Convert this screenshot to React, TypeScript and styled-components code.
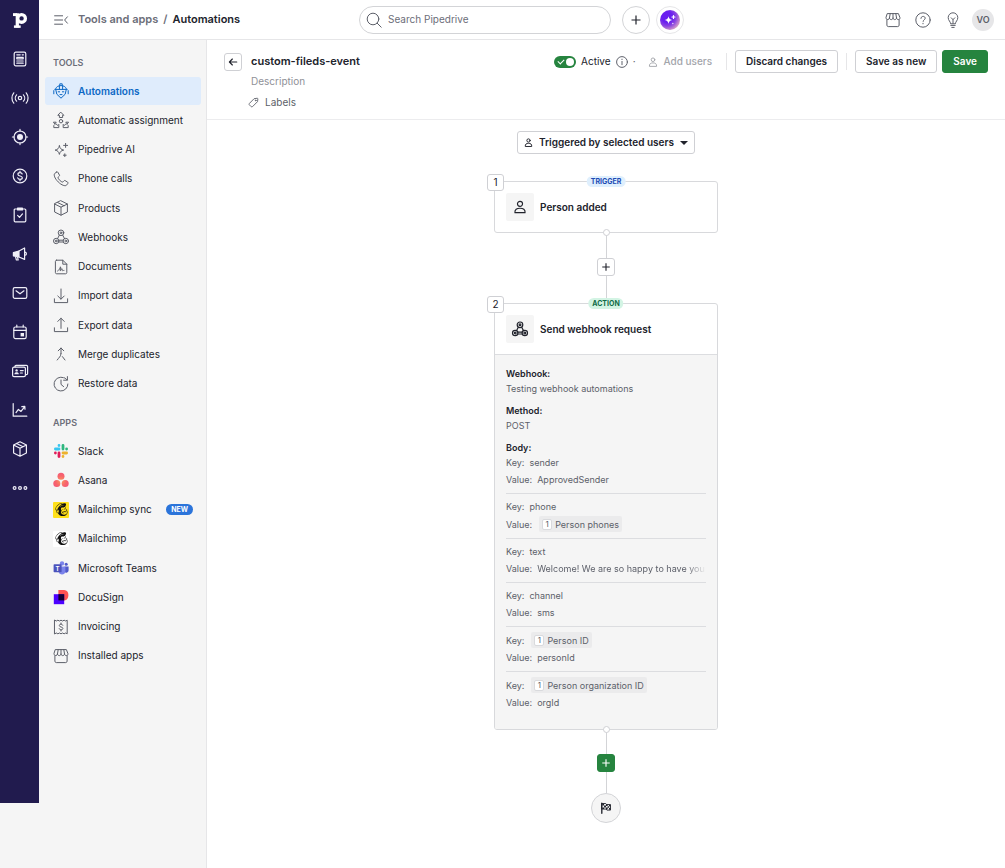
import React from 'react';
import styled, { createGlobalStyle, css } from 'styled-components';
import { FaMailchimp } from 'react-icons/fa';

const GlobalStyle = createGlobalStyle`
  *, *::before, *::after { box-sizing: border-box; }
  body {
    margin: 0;
    background: #fff;
    color: #21232c;
    font-family: Inter, "Liberation Sans", sans-serif;
    font-size: 10px;
    line-height: 15px;
  }
  button, input, select { font: inherit; color: inherit; margin: 0; }
  button { cursor: pointer; }
  a { color: inherit; text-decoration: none; }
  ul, h1, h2, h3, p, dl, dd { margin: 0; padding: 0; list-style: none; font: inherit; }
  svg { display: block; flex: none; }
`;

/* ---------- icons ---------- */

const Line = styled.svg.attrs<{ $size?: number; $stroke?: number }>({
  viewBox: '0 0 16 16',
  'aria-hidden': true,
})<{ $size?: number; $stroke?: number }>`
  width: ${p => p.$size ?? 16}px;
  height: ${p => p.$size ?? 16}px;
  fill: none;
  stroke: currentColor;
  stroke-width: ${p => p.$stroke ?? 1};
  stroke-linecap: round;
  stroke-linejoin: round;
  overflow: visible;
`;

const solid = { fill: 'currentColor', stroke: 'none' };

const PipedriveLogo = () => (
  <Line $size={18} $stroke={2.9}>
    <path d="M5.600 2v12.600" strokeLinecap="butt" />
    <path d="M1.800 3.200h3.400" strokeLinecap="butt" strokeWidth="2.600" />
    <circle cx="9.400" cy="6.600" r="3.400" />
    <path d="M2.600 13.900h6" strokeLinecap="butt" strokeWidth="2.200" />
  </Line>
);

const shapes = {
  news: (
    <>
      <rect x="2.200" y="1.200" width="11.600" height="13.600" rx="1.600" />
      <path d="M4.800 3.800h3.400M10.200 3.800h1.200M4.800 6.400h6.400v1.400H4.800zM4.800 10h6.400M4.800 12.200h6.400" />
    </>
  ),
  radio: (
    <>
      <circle cx="8" cy="8" r="1.700" />
      <path d="M4.600 4.800a4.600 4.600 0 0 0 0 6.400M11.400 4.800a4.600 4.600 0 0 1 0 6.400M1.800 2.800a8.200 8.200 0 0 0 0 10.400M14.200 2.800a8.200 8.200 0 0 1 0 10.400" />
    </>
  ),
  target: (
    <>
      <circle cx="8" cy="8" r="6" />
      <circle cx="8" cy="8" r="3" {...solid} />
      <path d="M8 .4v1.800M8 13.800v1.800M.4 8h1.800M13.800 8h1.800" />
    </>
  ),
  dollar: (
    <>
      <circle cx="8" cy="8" r="6.800" />
      <path d="M10.200 6c-.3-.9-1.100-1.400-2.200-1.400-1.200 0-2.100.6-2.100 1.600 0 2.400 4.400 1.200 4.400 3.600 0 1-1 1.600-2.200 1.600-1.200 0-2.100-.5-2.400-1.500M8 3.200v1.400M8 11.400v1.400" />
    </>
  ),
  clipboard: (
    <>
      <rect x="2.200" y="2" width="11.600" height="12.800" rx="1" />
      <path d="M5.600 1h4.800v2H5.600z" fill="currentColor" />
      <path d="M5.600 8.400l1.900 1.900 3-3.400" />
    </>
  ),
  megaphone: (
    <>
      <path d="M1.400 6.600L7 5v6l-5.600-1.200z" fill="currentColor" />
      <path d="M7 5l5.600-3v11.400L7 11M13.200 6.200c1.600.2 1.600 2.800 0 3M3.600 11l.8 3h1.800l-.6-2.600" />
    </>
  ),
  mail: (
    <>
      <rect x="1.200" y="2.600" width="13.600" height="10.800" rx="1.600" />
      <path d="M4 5.800l4 3 4-3" />
    </>
  ),
  calendar: (
    <>
      <rect x="1.800" y="3" width="12.400" height="11.600" rx="1.600" />
      <path d="M2 6.400h12M4.800 1.200V3M11.200 1.200V3" />
      <path d="M8.600 9h3.400v3.400H8.600z" {...solid} />
    </>
  ),
  cards: (
    <>
      <rect x=".6" y="4.200" width="12.800" height="9.400" rx="1.400" />
      <path d="M3 4V3.400c0-.6.4-1 1-1h10.400c.7 0 1.200.5 1.200 1.200v6.800c0 .7-.5 1.200-1.200 1.200h-.8" />
      <circle cx="4.600" cy="7.400" r="1.200" {...solid} />
      <path d="M2.400 11.200c0-2.600 4.400-2.600 4.400 0z" {...solid} />
      <path d="M8.400 7.600h2.800M8.400 10h2" />
    </>
  ),
  chart: <path d="M1.200 1.600v12.600h13.600M4 10.600l2.400-3.200 2.600 2 3.600-4.600M9.800 4.600l3-.2.200 2.800" />,
  box: <path d="M8 .8l6.400 3.200v8L8 15.200 1.600 12V4zM1.600 4L8 7.200 14.400 4M8 7.200v8M4.600 2.500L11 5.700" />,
  more: (
    <>
      <circle cx="2.600" cy="8" r="1.400" />
      <circle cx="8" cy="8" r="1.400" />
      <circle cx="13.400" cy="8" r="1.400" />
    </>
  ),
  menu: <path d="M1.600 3.800h8M1.600 8h8M1.600 12.200h8M14.400 4.800L11.600 8l2.800 3.200" />,
  robot: (
    <>
      <path d="M2.800 6.800l1 4.400L8 15.200l4.200-4 1-4.400M1.800 6.400h12.400M2.600 5.800C3.400 3.600 5.600 2.600 8 2.600s4.600 1 5.400 3.200M6.800 2.600V.8h2.400v1.800M.8 7.600v3.200M15.200 7.600v3.200M6.400 3v3.200M9.600 3v3.200" />
      <path d="M5.200 8.800h1.400M9.400 8.800h1.400M7 11.600h2" />
    </>
  ),
  assign: (
    <>
      <circle cx="8" cy="9.200" r="1.700" />
      <path d="M8 .4l2.800 2.900H9.600v2.200H6.400V3.300H5.200zM.8 10.200h2.400l-.8 1.200 2.400 2 1-1v3.200H.8v-2l1-1zM15.200 10.200h-2.400l.8 1.200-2.400 2-1-1v3.200h5v-2l-1-1z" />
    </>
  ),
  sparkles: (
    <>
      <path d="M6.400 3.800c.6 2.700 1.600 3.700 4.300 4.300-2.700.6-3.700 1.600-4.300 4.300-.6-2.700-1.600-3.700-4.300-4.300 2.700-.6 3.700-1.600 4.300-4.300z" />
      <path d="M12.600 1.400v4M10.600 3.400h4M11.800 11.800v2.800M10.400 13.200h2.800" />
    </>
  ),
  phone: (
    <path d="M3.600 1L1.600 2.600C.6 3.800 1.600 7.400 5.200 10.900c3.500 3.500 7 4.400 8.200 3.400l1.500-1.900c.3-.4.2-.9-.2-1.200l-2.600-1.600c-.4-.2-.8-.2-1.100.2l-.9 1c-.4.400-.9.300-1.300.1C7.200 10 6 8.800 5.200 7.300c-.2-.4-.3-.9.1-1.300l.9-.8c.4-.3.5-.8.200-1.200L4.900 1.300C4.600.8 4 .7 3.600 1z" />
  ),
  webhook: (
    <>
      <circle cx="8" cy="3.800" r="2.800" />
      <circle cx="3.200" cy="12" r="2.700" />
      <circle cx="12.800" cy="12" r="2.700" />
      <circle cx="8" cy="3.800" r=".9" />
      <circle cx="3.200" cy="12" r=".9" />
      <circle cx="12.800" cy="12" r=".9" />
      <path d="M6.300 6.200L4.600 9.600M9.700 6.200l1.800 3.400M6 11.200h4M6 13h4" />
    </>
  ),
  document: (
    <>
      <path d="M3.600 1.200h6.200l4 4v8.400c0 .7-.5 1.200-1.200 1.200h-9c-.7 0-1.200-.5-1.200-1.200V2.400c0-.7.5-1.200 1.200-1.200zM9.800 1.200v4h4" />
      <path d="M4.600 12c1.600-1 2.600-2.600 2.800-4.200.8 1-.4 3-.2 4 1-.2 1-2.200 1.800-2.200.6.200-.2 2 .6 2.200.4 0 .6-.4 1.400-.4" />
    </>
  ),
  download: <path d="M8 1v10M4.800 8L8 11.200 11.200 8M1.400 10.800v3.800h13.200v-3.800" />,
  upload: <path d="M8 11.400V1.200M4.800 4.400L8 1.200l3.200 3.200M1.400 10.800v3.800h13.200v-3.800" />,
  merge: <path d="M8 7.600V2M5.200 4.800L8 2l2.800 2.800M8 7.600c0 2.800-2.200 4-3.800 6.400M9.400 10.600L12 14" />,
  restore: <path d="M10.400 1.600A6.900 6.900 0 1 0 14.900 8M10.600 4.200h3.800V.6M14.200 4C13.400 3 12.400 2.200 11.400 1.800M8 4v4.400l2.600 2.200" />,
  receipt: (
    <>
      <path d="M1.800 1.200l1.500.8 1.600-.8 1.500.8L8 1.200l1.600.8 1.500-.8 1.600.8 1.500-.8v13.600l-1.500-.8-1.600.8-1.500-.8-1.600.8-1.600-.8-1.500.8-1.600-.8-1.500.8z" />
      <path d="M9.800 6.300C9.600 5.600 8.900 5.200 8 5.200c-1 0-1.700.5-1.700 1.300 0 2 3.600 1 3.600 3 0 .8-.8 1.300-1.800 1.300S6.400 10.400 6.200 9.600M8 4v1.200M8 10.800V12" />
    </>
  ),
  store: (
    <>
      <path d="M2.600 1.600h10.800l1.600 4.200c0 2.400-3.400 2.400-3.500 0 0 2.400-3.500 2.400-3.500 0 0 2.400-3.500 2.400-3.500 0C4.400 8.200 1 8.200 1 5.800zM4.500 5.800l.7-4.200M8 5.800V1.600M11.500 5.800l-.7-4.200" />
      <path d="M1.900 7.600v5.600c0 .8.600 1.400 1.400 1.400h9.400c.8 0 1.400-.6 1.400-1.400V7.600" />
    </>
  ),
  search: (
    <>
      <circle cx="7" cy="7" r="5.800" />
      <path d="M11.200 11.200l4 4" />
    </>
  ),
  plus: <path d="M8 2v12M2 8h12" strokeLinecap="butt" />,
  help: (
    <>
      <circle cx="8" cy="8" r="7.200" />
      <path d="M5.900 6.400c0-2.800 4.300-2.600 4.300-.2 0 1.600-2.100 1.600-2.100 3.200M8 11.300v.5" />
    </>
  ),
  bulb: (
    <>
      <path d="M5.600 11.400c0-1.800-2.400-2.800-2.400-5.800a4.800 4.800 0 0 1 9.600 0c0 3-2.400 4-2.400 5.800zM5.800 13.400h4.400M6.800 15.400h2.400M6.200 5.800L8 7.600l1.800-1.800M8 7.600v3.600" />
    </>
  ),
  back: <path d="M14 8H2.400M7 3.200L2.200 8 7 12.800" />,
  tag: (
    <>
      <path d="M9.400 2.400l4-.6c.6 0 1 .4 1 1l-.6 4-7.200 7.200c-.6.6-1.400.6-2 0l-2.600-2.600c-.6-.6-.6-1.400 0-2z" />
      <circle cx="11.200" cy="5" r=".6" />
    </>
  ),
  person: (
    <>
      <circle cx="8" cy="4.400" r="2.900" />
      <path d="M2.200 14.400c-.4-3.400 2.200-5 5.800-5s6.200 1.600 5.800 5z" />
    </>
  ),
  info: (
    <>
      <circle cx="8" cy="8" r="7.200" />
      <path d="M8 7.200v4.400M8 4.200v.6" />
    </>
  ),
  flag: (
    <>
      <path d="M2.400 15V1.600" strokeWidth="1.800" />
      <path d="M2.600 2h5l1 1.400H14v7.400H9.200l-1-1.400H2.600z" />
      <path d="M3 2.400h2.400v2.400H3zM5.400 4.800h2.600v2.400H5.400zM8 3h2.200v2.400H8zM10.200 5.600h2v2h-2zM8 7.400h2.200v2.200H8zM12 3.600h1.800v2H12zM3 7.200h2.400v2H3zM12 8h1.800v2.400H12z" {...solid} />
    </>
  ),
};

type IconName = keyof typeof shapes;

const Icon = ({ name, size, stroke }: { name: IconName; size?: number; stroke?: number }) => (
  <Line $size={size} $stroke={stroke}>{shapes[name]}</Line>
);

const Logo = styled.svg.attrs({ viewBox: '0 0 16 16', 'aria-hidden': true })`
  width: 16px;
  height: 16px;
`;

const SlackLogo = () => (
  <Logo>
    <g strokeWidth="2.800" strokeLinecap="round">
      <path d="M6 2.400v.1M2.400 6H6" stroke="#36c5f0" />
      <path d="M13.600 6v.1M10 2.400V6" stroke="#2eb67d" />
      <path d="M10 13.600v-.1M10 10h3.600" stroke="#ecb22e" />
      <path d="M2.400 10v-.1M6 10v3.600" stroke="#e01e5a" />
    </g>
  </Logo>
);

const AsanaLogo = () => (
  <Logo>
    <defs>
      <radialGradient id="asana" gradientUnits="userSpaceOnUse" cx="8" cy="9" r="9">
        <stop offset="0" stopColor="#f99a5c" />
        <stop offset=".6" stopColor="#f7646c" />
        <stop offset="1" stopColor="#f4587a" />
      </radialGradient>
    </defs>
    <g fill="url(#asana)">
      <circle cx="8" cy="4.200" r="3.500" />
      <circle cx="3.800" cy="11.600" r="3.500" />
      <circle cx="12.200" cy="11.600" r="3.500" />
    </g>
  </Logo>
);

const TeamsLogo = () => (
  <Logo>
    <circle cx="13.200" cy="4.200" r="1.500" fill="#5059c9" />
    <circle cx="9" cy="3.400" r="2.200" fill="#7b83eb" />
    <path d="M11.600 6.400h4v4a2.400 2.400 0 0 1-4 1.600z" fill="#5059c9" />
    <path d="M5.400 6.400h7v5a3.600 3.600 0 0 1-7 .4z" fill="#7b83eb" />
    <rect x=".6" y="4.200" width="8" height="8" rx=".7" fill="#4b53bc" />
    <text x="4.600" y="10.500" fontSize="6" fontWeight="700" textAnchor="middle" fill="#fff">T</text>
  </Logo>
);

const DocuSignLogo = () => (
  <Logo>
    <path d="M5.400 1h5.800c2.800 0 4.200 2.200 4.200 5s-1.400 5.400-4.200 5.400H5.400z" fill="#ff5252" />
    <path d="M.8 5.200h10.400v10H.8z" fill="#4c00ff" />
    <path d="M5.400 5.200h5.800v6.200H5.400z" fill="#130032" />
  </Logo>
);

const ChimpTile = styled.span<{ $background: string }>`
  display: grid;
  place-items: center;
  width: 16px;
  height: 16px;
  border-radius: 1px;
  background: ${p => p.$background};
`;

/* ---------- page frame ---------- */

const Page = styled.div`
  display: grid;
  grid-template-columns: 39px 168px minmax(0, 1fr);
  grid-template-rows: 40px 1fr;
  min-height: 100vh;
`;

const RailColumn = styled.div`
  grid-row: 1 / 3;
  padding-bottom: 65px;
  background: #f5f5f5;
`;

const Rail = styled.nav`
  display: flex;
  flex-direction: column;
  align-items: center;
  height: 100%;
  background: #211b4e;
  color: #fff;
`;

const RailLogo = styled.a`
  display: grid;
  place-items: center;
  width: 39px;
  height: 39px;
`;

const RailLink = styled.a`
  display: grid;
  place-items: center;
  width: 39px;
  height: 39px;
  color: #f0eff8;
`;

const TopBar = styled.header`
  grid-column: 2 / 4;
  display: grid;
  grid-template-columns: 1fr auto 1fr;
  align-items: center;
  padding: 0 11px 0 10px;
  border-bottom: 1px solid #e6e6e8;
  background: #fff;
`;

const Crumbs = styled.nav`
  display: flex;
  align-items: center;
  gap: 5px;
  font-size: 11px;
  font-weight: 600;
  white-space: nowrap;
  color: #6c6e79;
`;

const PlainButton = styled.button`
  display: grid;
  place-items: center;
  padding: 0;
  border: 0;
  background: none;
  color: #5c5f69;
`;

const MenuButton = styled(PlainButton)`
  margin: 0 4px;
`;

const Current = styled.span`
  color: #21232c;
`;

const SearchGroup = styled.div`
  display: flex;
  align-items: center;
`;

const SearchBox = styled.label`
  display: flex;
  align-items: center;
  gap: 6px;
  width: 252px;
  height: 28px;
  padding: 0 6px;
  border: 1px solid #d3d4d7;
  border-radius: 14px;
  color: #5c5f69;
  input {
    flex: 1;
    min-width: 0;
    padding: 0;
    border: 0;
    outline: 0;
    background: none;
  }
  input::placeholder { color: #6c6e79; opacity: 1; }
`;

const RoundButton = styled.button`
  display: grid;
  place-items: center;
  width: 28px;
  height: 28px;
  margin-left: 11px;
  padding: 0;
  border: 1px solid #d3d4d7;
  border-radius: 50%;
  background: #fff;
  color: #21232c;
`;

const AiButton = styled(RoundButton)`
  margin-left: 6px;
  border-color: #e6e6e8;
`;

const AiOrb = styled.span`
  display: grid;
  place-items: center;
  width: 20px;
  height: 20px;
  border-radius: 50%;
  background: radial-gradient(circle at 35% 35%, #6a1ff0 0 30%, #8b45e0 50%, #d49bc8 75%, #f1d8dc 100%);
  color: #fff;
`;

const TopActions = styled.div`
  display: flex;
  align-items: center;
  justify-content: flex-end;
  gap: 14px;
`;

const Avatar = styled.button`
  width: 22px;
  height: 22px;
  margin-left: -3px;
  padding: 0;
  border: 0;
  border-radius: 50%;
  background: #e6e6e8;
  color: #5c5f69;
  font-size: 9px;
  font-weight: 600;
  line-height: 22px;
`;

/* ---------- sidebar ---------- */

const Sidebar = styled.aside`
  padding: 15px 5px 0 6px;
  border-right: 1px solid #e6e6e8;
  background: #f5f5f5;
`;

const GroupTitle = styled.h2`
  padding-left: 8px;
  font-size: 9px;
  font-weight: 600;
  color: #6c6e79;
`;

const NavList = styled.ul<{ $height: number }>`
  display: grid;
  grid-auto-rows: 1fr;
  height: ${p => p.$height}px;
  margin: 7px 0 16px;
`;

const NavLink = styled.a<{ $active?: boolean }>`
  display: flex;
  align-items: center;
  gap: 9px;
  height: 28px;
  padding: 0 8px;
  border-radius: 3px;
  white-space: nowrap;
  color: #21232c;
  > :first-child { color: #5c5f69; }
  ${p => p.$active && css`
    background: #dfecfc;
    color: #0d68c5;
    font-weight: 600;
    > :first-child { color: #0d68c5; }
  `}
`;

const NewBadge = styled.span`
  margin-left: auto;
  padding: 0 5px;
  border-radius: 6px;
  background: #2b74da;
  color: #fff;
  font-size: 7px;
  font-weight: 700;
  line-height: 11px;
`;

/* ---------- editor ---------- */

const Editor = styled.main`
  display: flex;
  flex-direction: column;
  min-width: 0;
  background: #fff;
`;

const EditorHeader = styled.div`
  display: flex;
  justify-content: space-between;
  align-items: flex-start;
  padding: 10px 17px 9px;
  border-bottom: 1px solid #ececee;
`;

const TitleBlock = styled.div`
  display: grid;
  grid-template-columns: 18px auto;
  column-gap: 9px;
  row-gap: 1px;
  align-items: center;
`;

const SquareButton = styled.button<{ $primary?: boolean }>`
  display: grid;
  place-items: center;
  width: 18px;
  height: 18px;
  padding: 0;
  border: 1px solid ${p => (p.$primary ? '#26843f' : '#cfd0d4')};
  border-radius: 3px;
  background: ${p => (p.$primary ? '#26843f' : '#fff')};
  color: ${p => (p.$primary ? '#fff' : '#21232c')};
`;

const Title = styled.h1`
  font-size: 11px;
  font-weight: 600;
  line-height: 23px;
`;

const Description = styled.p`
  grid-column: 2;
  color: #8f9198;
`;

const LabelsButton = styled.button`
  grid-column: 2;
  justify-self: start;
  display: flex;
  align-items: center;
  gap: 6px;
  margin: 5px 0 0 -3px;
  padding: 0;
  border: 0;
  background: none;
  color: #5c5f69;
`;

const Controls = styled.div`
  display: flex;
  align-items: center;
  height: 23px;
  white-space: nowrap;
`;

const SwitchLabel = styled.label`
  display: flex;
  align-items: center;
  gap: 5px;
  margin-right: 5px;
`;

const Switch = styled.input.attrs({ type: 'checkbox', role: 'switch' })`
  appearance: none;
  position: relative;
  width: 22px;
  height: 12px;
  border-radius: 6px;
  background: #b8bac0;
  &:checked { background: #26843f; }
  &::before {
    content: '';
    position: absolute;
    top: 2px;
    left: 2px;
    width: 8px;
    height: 8px;
    border-radius: 50%;
    background: #fff;
  }
  &:checked::before { left: 12px; }
  &:checked::after {
    content: '';
    position: absolute;
    top: 3px;
    left: 4px;
    width: 6px;
    height: 4px;
    border: solid #fff;
    border-width: 0 0 1px 1px;
    transform: rotate(-45deg);
  }
`;

const Dot = styled.span`
  margin: 0 12px 0 5px;
  color: #5c5f69;
`;

const AddUsers = styled.button`
  display: flex;
  align-items: center;
  gap: 6px;
  padding: 0;
  border: 0;
  background: none;
  color: #a3a5ab;
  font-weight: 500;
`;

const Divider = styled.span<{ $left: number }>`
  width: 1px;
  height: 17px;
  margin: 0 8px 0 ${p => p.$left}px;
  background: #e6e6e8;
`;

const Button = styled.button<{ $primary?: boolean }>`
  height: 23px;
  padding: 0 10px;
  border: 1px solid ${p => (p.$primary ? '#26843f' : '#cfd0d4')};
  border-radius: 3px;
  background: ${p => (p.$primary ? '#26843f' : '#fff')};
  color: ${p => (p.$primary ? '#fff' : '#21232c')};
  font-weight: 600;
  & + & { margin-left: 5px; }
`;

/* ---------- flow ---------- */

const Flow = styled.div`
  display: flex;
  flex-direction: column;
  align-items: center;
  padding: 11px 16px 40px;
`;

const TriggerPicker = styled.label`
  display: flex;
  align-items: center;
  gap: 6px;
  height: 23px;
  margin-bottom: 27px;
  padding: 0 6px;
  border: 1px solid #cfd0d4;
  border-radius: 3px;
  font-weight: 600;
  select {
    appearance: none;
    padding: 0;
    border: 0;
    outline: 0;
    background: none;
  }
`;

const Caret = styled.span`
  border: solid transparent;
  border-width: 4px 4px 0;
  border-top-color: #21232c;
`;

const Card = styled.section`
  position: relative;
  width: 224px;
  border: 1px solid #d8d9dc;
  border-radius: 3px;
  background: #fff;
`;

const StepNumber = styled.span`
  position: absolute;
  top: -8px;
  left: -8px;
  width: 17px;
  height: 17px;
  border: 1px solid #cfd0d4;
  border-radius: 3px;
  background: #fff;
  line-height: 15px;
  text-align: center;
`;

const KindBadge = styled.span<{ $kind: 'trigger' | 'action' }>`
  position: absolute;
  top: -6px;
  left: 50%;
  transform: translateX(-50%);
  padding: 0 4px;
  border-radius: 6px;
  background: ${p => (p.$kind === 'trigger' ? '#dfeffd' : '#d3f4e4')};
  color: ${p => (p.$kind === 'trigger' ? '#1d4bb4' : '#0f6b46')};
  font-size: 7px;
  font-weight: 700;
  line-height: 11px;
`;

const Port = styled.span`
  position: absolute;
  bottom: -4px;
  left: 50%;
  width: 7px;
  height: 7px;
  margin-left: -3px;
  border: 1px solid #cfd0d4;
  border-radius: 50%;
  background: #fff;
`;

const CardHead = styled.div`
  display: flex;
  align-items: center;
  gap: 6px;
  height: 50px;
  padding: 0 11px;
`;

const IconTile = styled.span`
  display: grid;
  place-items: center;
  width: 28px;
  height: 28px;
  border-radius: 2px;
  background: #f5f5f5;
`;

const CardTitle = styled.h3`
  font-weight: 600;
`;

const CardBody = styled.div`
  padding: 11px 11px 19px;
  border-top: 1px solid #dcdde0;
  border-radius: 0 0 2px 2px;
  background: #f5f5f5;
  color: #5c5f69;
  font-size: 9px;
`;

const Fact = styled.dl`
  margin-bottom: 7px;
  dt { font-weight: 600; color: #21232c; }
`;

const BodyTitle = styled.h4`
  margin: 0;
  font-size: 9px;
  font-weight: 600;
  color: #21232c;
`;

const Pair = styled.dl`
  display: grid;
  grid-template-columns: minmax(0, 1fr);
  row-gap: 2px;
  & + & {
    margin-top: 6px;
    padding-top: 5px;
    border-top: 1px solid #dcdde0;
  }
`;

const PairRow = styled.div`
  display: flex;
  align-items: center;
  gap: 5px;
`;

const PairValue = styled.dd<{ $fade?: boolean }>`
  flex: 1;
  min-width: 0;
  overflow: hidden;
  white-space: nowrap;
  ${p => p.$fade && css`
    mask-image: linear-gradient(to right, #000 88%, transparent);
  `}
`;

const Chip = styled.span`
  display: inline-flex;
  align-items: center;
  gap: 3px;
  height: 16px;
  margin-left: 2px;
  padding: 0 3px;
  border-radius: 2px;
  background: #ebebec;
  vertical-align: top;
`;

const ChipNumber = styled.span`
  width: 10px;
  height: 11px;
  border: 1px solid #d9dadd;
  border-radius: 2px;
  background: #fff;
  font-size: 8px;
  line-height: 9px;
  text-align: center;
`;

const Connector = styled.span<{ $length: number }>`
  width: 1px;
  height: ${p => p.$length}px;
  background: #d3d4d7;
`;

const EndNode = styled.span`
  display: grid;
  place-items: center;
  width: 30px;
  height: 30px;
  border: 1px solid #d3d4d7;
  border-radius: 50%;
  background: #f5f5f5;
`;

/* ---------- data ---------- */

const railLinks: { icon: IconName; label: string }[] = [
  { icon: 'news', label: 'Feed' },
  { icon: 'radio', label: 'Pulse' },
  { icon: 'target', label: 'Leads' },
  { icon: 'dollar', label: 'Deals' },
  { icon: 'clipboard', label: 'Projects' },
  { icon: 'megaphone', label: 'Campaigns' },
  { icon: 'mail', label: 'Mail' },
  { icon: 'calendar', label: 'Activities' },
  { icon: 'cards', label: 'Contacts' },
  { icon: 'chart', label: 'Insights' },
  { icon: 'box', label: 'Products' },
  { icon: 'more', label: 'More' },
];

const tools: { icon: IconName; label: string }[] = [
  { icon: 'robot', label: 'Automations' },
  { icon: 'assign', label: 'Automatic assignment' },
  { icon: 'sparkles', label: 'Pipedrive AI' },
  { icon: 'phone', label: 'Phone calls' },
  { icon: 'box', label: 'Products' },
  { icon: 'webhook', label: 'Webhooks' },
  { icon: 'document', label: 'Documents' },
  { icon: 'download', label: 'Import data' },
  { icon: 'upload', label: 'Export data' },
  { icon: 'merge', label: 'Merge duplicates' },
  { icon: 'restore', label: 'Restore data' },
];

const apps: { logo: React.ReactNode; label: string; isNew?: boolean }[] = [
  { logo: <SlackLogo />, label: 'Slack' },
  { logo: <AsanaLogo />, label: 'Asana' },
  { logo: <ChimpTile $background="#ffe01b"><FaMailchimp size={15} color="#111" /></ChimpTile>, label: 'Mailchimp sync', isNew: true },
  { logo: <ChimpTile $background="#fff"><FaMailchimp size={15} color="#111" /></ChimpTile>, label: 'Mailchimp' },
  { logo: <TeamsLogo />, label: 'Microsoft Teams' },
  { logo: <DocuSignLogo />, label: 'DocuSign' },
  { logo: <Icon name="receipt" />, label: 'Invoicing' },
  { logo: <Icon name="store" />, label: 'Installed apps' },
];

type Field = { text: string; step?: number; fade?: boolean };

const bodyPairs: { key: Field; value: Field }[] = [
  { key: { text: 'sender' }, value: { text: 'ApprovedSender' } },
  { key: { text: 'phone' }, value: { text: 'Person phones', step: 1 } },
  { key: { text: 'text' }, value: { text: 'Welcome! We are so happy to have you', fade: true } },
  { key: { text: 'channel' }, value: { text: 'sms' } },
  { key: { text: 'Person ID', step: 1 }, value: { text: 'personId' } },
  { key: { text: 'Person organization ID', step: 1 }, value: { text: 'orgId' } },
];

const FieldRow = ({ name, field }: { name: string; field: Field }) => (
  <PairRow>
    <dt>{name}</dt>
    <PairValue $fade={field.fade}>
      {field.step ? (
        <Chip>
          <ChipNumber>{field.step}</ChipNumber>
          {field.text}
        </Chip>
      ) : (
        field.text
      )}
    </PairValue>
  </PairRow>
);

export default function App() {
  return (
    <>
      <GlobalStyle />
      <Page>
        <RailColumn>
          <Rail aria-label="Main">
            <RailLogo href="#home" aria-label="Home"><PipedriveLogo /></RailLogo>
            {railLinks.map(link => (
              <RailLink key={link.label} href="#" aria-label={link.label}>
                <Icon name={link.icon} stroke={1.2} />
              </RailLink>
            ))}
          </Rail>
        </RailColumn>

        <TopBar>
          <Crumbs aria-label="Breadcrumb">
            <MenuButton aria-label="Collapse menu"><Icon name="menu" /></MenuButton>
            <a href="#tools">Tools and apps</a>
            <span>/</span>
            <Current>Automations</Current>
          </Crumbs>
          <SearchGroup>
            <SearchBox>
              <Icon name="search" />
              <input type="search" placeholder="Search Pipedrive" aria-label="Search Pipedrive" />
            </SearchBox>
            <RoundButton aria-label="Add"><Icon name="plus" size={12} stroke={1.6} /></RoundButton>
            <AiButton aria-label="Assistant">
              <AiOrb>
                <Line $size={12} $stroke={1.6}>
                  <path fill="currentColor" stroke="none" d="M6 3c.8 3.400 1.600 4.200 5 5-3.400.8-4.200 1.600-5 5-.8-3.400-1.600-4.200-5-5 3.400-.8 4.200-1.600 5-5z" />
                  <path d="M12.600 2v4M10.600 4h4M11.800 12.400v.4" />
                </Line>
              </AiOrb>
            </AiButton>
          </SearchGroup>
          <TopActions>
            <PlainButton aria-label="Marketplace"><Icon name="store" /></PlainButton>
            <PlainButton aria-label="Help"><Icon name="help" /></PlainButton>
            <PlainButton aria-label="Tips"><Icon name="bulb" /></PlainButton>
            <Avatar>VO</Avatar>
          </TopActions>
        </TopBar>

        <Sidebar>
          <GroupTitle>TOOLS</GroupTitle>
          <NavList $height={322}>
            {tools.map((tool, index) => (
              <li key={tool.label}>
                <NavLink href="#" $active={index === 0}>
                  <Icon name={tool.icon} />
                  <span>{tool.label}</span>
                </NavLink>
              </li>
            ))}
          </NavList>
          <GroupTitle>APPS</GroupTitle>
          <NavList $height={234}>
            {apps.map(app => (
              <li key={app.label}>
                <NavLink href="#">
                  {app.logo}
                  <span>{app.label}</span>
                  {app.isNew && <NewBadge>NEW</NewBadge>}
                </NavLink>
              </li>
            ))}
          </NavList>
        </Sidebar>

        <Editor>
          <EditorHeader>
            <TitleBlock>
              <SquareButton aria-label="Back"><Icon name="back" size={10} stroke={1.8} /></SquareButton>
              <Title>custom-fileds-event</Title>
              <Description>Description</Description>
              <LabelsButton><Icon name="tag" size={11} stroke={1.3} />Labels</LabelsButton>
            </TitleBlock>
            <Controls>
              <SwitchLabel><Switch defaultChecked />Active</SwitchLabel>
              <PlainButton aria-label="About status"><Icon name="info" size={12} stroke={1.3} /></PlainButton>
              <Dot>·</Dot>
              <AddUsers><Icon name="person" size={10} stroke={1.5} />Add users</AddUsers>
              <Divider $left={14} />
              <Button>Discard changes</Button>
              <Divider $left={8} />
              <Button>Save as new</Button>
              <Button $primary>Save</Button>
            </Controls>
          </EditorHeader>

          <Flow>
            <TriggerPicker>
              <Icon name="person" size={9} stroke={1.7} />
              <select aria-label="Who triggers this automation">
                <option>Triggered by selected users</option>
              </select>
              <Caret />
            </TriggerPicker>

            <Card>
              <StepNumber>1</StepNumber>
              <KindBadge $kind="trigger">TRIGGER</KindBadge>
              <CardHead>
                <IconTile><Icon name="person" size={14} stroke={1.3} /></IconTile>
                <CardTitle>Person added</CardTitle>
              </CardHead>
              <Port />
            </Card>
            <Connector $length={25} />
            <SquareButton aria-label="Insert step"><Icon name="plus" size={10} stroke={1.8} /></SquareButton>
            <Connector $length={27} />

            <Card>
              <StepNumber>2</StepNumber>
              <KindBadge $kind="action">ACTION</KindBadge>
              <CardHead>
                <IconTile><Icon name="webhook" stroke={1.2} /></IconTile>
                <CardTitle>Send webhook request</CardTitle>
              </CardHead>
              <CardBody>
                <Fact>
                  <dt>Webhook:</dt>
                  <dd>Testing webhook automations</dd>
                </Fact>
                <Fact>
                  <dt>Method:</dt>
                  <dd>POST</dd>
                </Fact>
                <BodyTitle>Body:</BodyTitle>
                {bodyPairs.map(pair => (
                  <Pair key={pair.key.text}>
                    <FieldRow name="Key:" field={pair.key} />
                    <FieldRow name="Value:" field={pair.value} />
                  </Pair>
                ))}
              </CardBody>
              <Port />
            </Card>
            <Connector $length={24} />
            <SquareButton $primary aria-label="Add step"><Icon name="plus" size={10} stroke={1.8} /></SquareButton>
            <Connector $length={21} />
            <EndNode><Icon name="flag" size={12} stroke={1.2} /></EndNode>
          </Flow>
        </Editor>
      </Page>
    </>
  );
}
